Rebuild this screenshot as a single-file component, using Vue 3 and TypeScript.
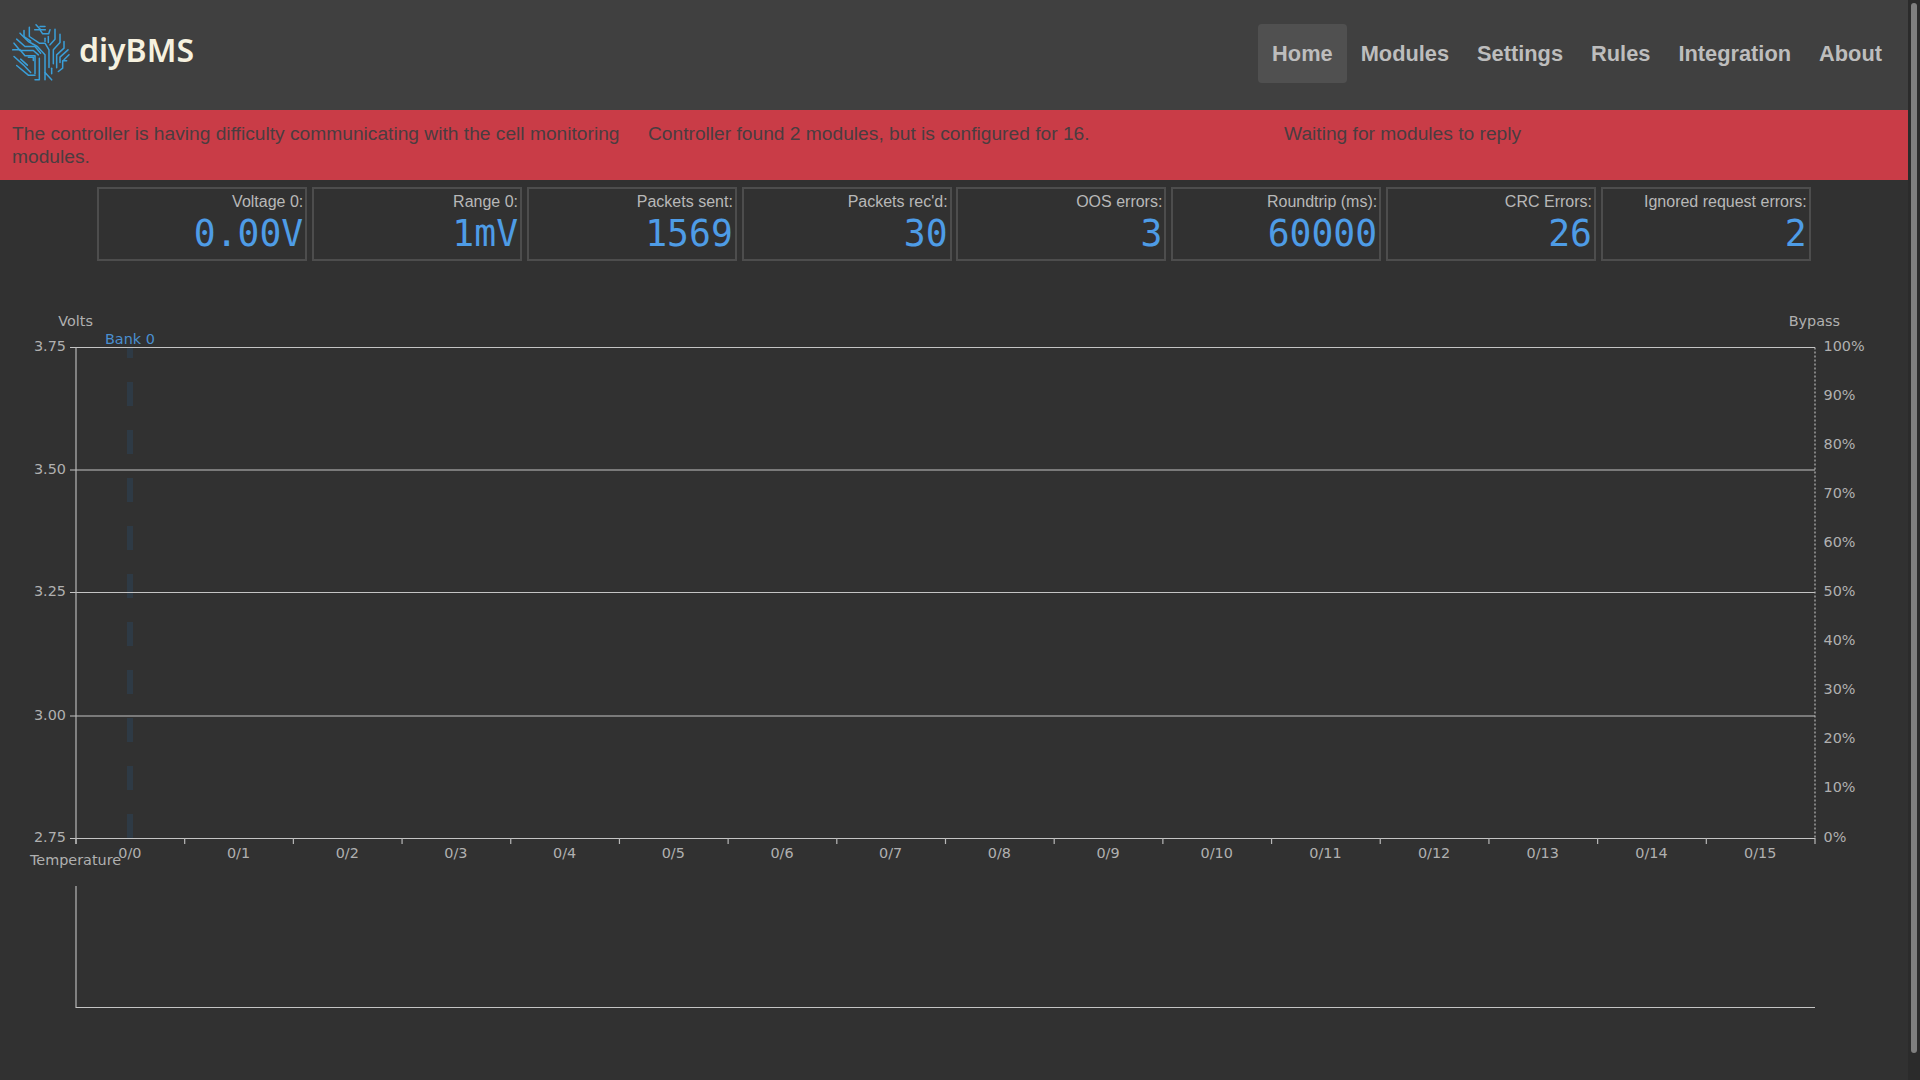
<script setup lang="ts">
const navItems: string[] = ['Home', 'Modules', 'Settings', 'Rules', 'Integration', 'About']
const alerts: string[] = [
  'The controller is having difficulty communicating with the cell monitoring modules.',
  'Controller found 2 modules, but is configured for 16.',
  'Waiting for modules to reply'
]
const stats: { label: string; value: string }[] = [
  { label: 'Voltage 0:', value: '0.00V' },
  { label: 'Range 0:', value: '1mV' },
  { label: 'Packets sent:', value: '1569' },
  { label: "Packets rec'd:", value: '30' },
  { label: 'OOS errors:', value: '3' },
  { label: 'Roundtrip (ms):', value: '60000' },
  { label: 'CRC Errors:', value: '26' },
  { label: 'Ignored request errors:', value: '2' }
]
const logoPaths: string[] = [
  'M108 75L122 90H136', 'M104 90H120L128 102H146L150 90', 'M88 82V110L118 130H135L147 150V203',
  'M72 92V110L92 124', 'M60 100L85 125L112 140L135 165V218', 'M50 118L75 140H105L122 160', 'M42 130L60 152H100L115 165',
  'M38 150H60L75 168H105V222', 'M42 170L70 195L92 218', 'M50 197L85 226H105', 'M62 178L82 196', 'M85 172H100V182',
  'M118 175V240H105', 'M135 240V218L155 240', 'M165 88V118L150 135', 'M145 110V128', 'M135 115V125',
  'M180 103V128L160 150V192', 'M192 125V145L170 165V204', 'M204 150L180 172V188', 'M207 165L192 180',
  'M200 183H188V205L175 215', 'M155 205V222', 'M120 80H135'
]
const top = 47.5
const left = 76
const right = 1815
const gridY = [47.5, 170, 292.5, 416, 538.5]
const yTicks = [3.75, 3.5, 3.25, 3.0, 2.75].map((v, i) => ({ label: v.toFixed(2), y: gridY[i] }))
const pctTicks = Array.from({ length: 11 }, (_, i) => ({ label: `${100 - i * 10}%`, y: top + i * 49.05 }))
const step = (right - left) / 16
const xTicks = Array.from({ length: 17 }, (_, i) => left + i * step)
const xLabels = Array.from({ length: 16 }, (_, i) => ({ label: `0/${i}`, x: left + (i + 0.5) * step - 0.5 }))
</script>

<template>
  <div class="page">
    <header class="topbar">
      <div class="brand">
        <svg class="logo" viewBox="36 70 174 176" width="58" height="59" aria-hidden="true">
          <g fill="none" stroke="#3a9ed8" stroke-width="4.5" stroke-linecap="round" stroke-linejoin="round">
            <path v-for="d in logoPaths" :key="d" :d="d" />
          </g>
        </svg>
        <span class="brand-name">diyBMS</span>
      </div>
      <nav class="nav">
        <a v-for="(item, i) in navItems" :key="item" class="nav-link" :class="{ active: i === 0 }">{{ item }}</a>
      </nav>
    </header>

    <section class="alerts">
      <div v-for="a in alerts" :key="a" class="alert">{{ a }}</div>
    </section>

    <section class="stats">
      <div v-for="s in stats" :key="s.label" class="stat">
        <div class="stat-label">{{ s.label }}</div>
        <div class="stat-value">{{ s.value }}</div>
      </div>
    </section>

    <svg class="chart" width="1908" height="760" viewBox="0 0 1908 760" aria-label="Cell voltage chart">
      <text class="t" x="93" y="26" text-anchor="end">Volts</text>
      <text class="t" x="1840" y="26" text-anchor="end">Bypass</text>
      <text class="t bank" x="105" y="44">Bank 0</text>

      <line x1="130" x2="130" y1="538" :y2="top" class="dash-bar" />

      <g v-for="t in yTicks" :key="t.label">
        <line x1="70" :x2="right" :y1="t.y" :y2="t.y" class="grid" />
        <text class="t" x="66" :y="t.y + 3.5" text-anchor="end">{{ t.label }}</text>
      </g>
      <text v-for="t in pctTicks" :key="t.label" class="t" x="1823.5" :y="t.y + 3.5">{{ t.label }}</text>
      <line :x1="left" :x2="left" :y1="top" y2="544" class="axis" />
      <line :x1="right" :x2="right" :y1="top" y2="538" class="axis-dashed" />
      <line v-for="x in xTicks" :key="x" :x1="x" :x2="x" y1="538" y2="544" class="axis" />
      <text v-for="l in xLabels" :key="l.label" class="t" :x="l.x" y="558" text-anchor="middle">{{ l.label }}</text>

      <text class="t" x="30" y="565">Temperature</text>
      <line :x1="left" :x2="left" y1="586" y2="708" class="axis" />
      <line :x1="left" :x2="right" y1="707.5" y2="707.5" class="grid" />
    </svg>

    <div class="scroll-track"><div class="scroll-thumb"></div></div>
  </div>
</template>

<style>
html, body { margin: 0; background: #313131; }
</style>

<style scoped>
.page {
  position: relative;
  width: 1920px;
  height: 1080px;
  padding-right: 12px;
  box-sizing: border-box;
  overflow: hidden;
  background: #313131;
  font-family: "Liberation Sans", Arial, sans-serif;
}
.topbar {
  height: 110px;
  box-sizing: border-box;
  background: #404040;
  display: flex;
  justify-content: space-between;
  align-items: flex-start;
  padding: 24px 12px 0 12px;
}
.brand { display: flex; align-items: center; gap: 9px; margin-top: -1px; }
.logo { display: block; }
.brand-name {
  font-family: "Noto Sans", "Open Sans", sans-serif;
  font-weight: 600;
  font-size: 32px;
  line-height: 1;
  color: #f6f1df;
  margin-top: -6px;
}
.nav { display: flex; }
.nav-link {
  font-weight: 700;
  font-size: 21.8px;
  line-height: 59px;
  padding: 0 14px;
  color: #bdbdbd;
  border-radius: 4px;
}
.nav-link.active { background: #505050; }
.alerts {
  display: grid;
  grid-template-columns: repeat(3, 1fr);
  height: 70px;
  background: #c93c47;
}
.alert {
  padding: 12px 12px 0;
  font-size: 19.2px;
  line-height: 23px;
  color: #4a3d40;
}
.stats {
  display: flex;
  justify-content: center;
  padding-top: 7px;
}
.stat {
  width: 210px;
  height: 74px;
  margin: 0 2.4px;
  box-sizing: border-box;
  border: 2px solid #4d4d4d;
  padding: 4px 2px 0;
  text-align: right;
}
.stat-label {
  font-size: 16px;
  line-height: 18px;
  color: #b8b8b8;
}
.stat-value {
  font-family: "DejaVu Sans Mono", monospace;
  font-size: 36.4px;
  line-height: 45px;
  color: #4e9ce6;
}
.chart {
  display: block;
  margin-top: 39px;
}
.t {
  font-family: "DejaVu Sans", sans-serif;
  font-size: 14.4px;
  fill: #b0b0b0;
}
.bank { fill: #4a8fd0; }
.grid { stroke: #c4c4c4; stroke-width: 1; }
.axis { stroke: #b8b8b8; stroke-width: 1.2; }
.axis-dashed { stroke: #b8b8b8; stroke-width: 1.2; stroke-dasharray: 2 2; }
.dash-bar { stroke: #2e3a45; stroke-width: 6; stroke-dasharray: 24 24; }
.scroll-track {
  position: absolute;
  top: 0;
  right: 0;
  width: 12px;
  height: 1080px;
  background: #2b2b2b;
}
.scroll-thumb {
  margin: 3px 0 0 3px;
  width: 6px;
  height: 1050px;
  border-radius: 3px;
  background: #7f7f7f;
}
</style>
